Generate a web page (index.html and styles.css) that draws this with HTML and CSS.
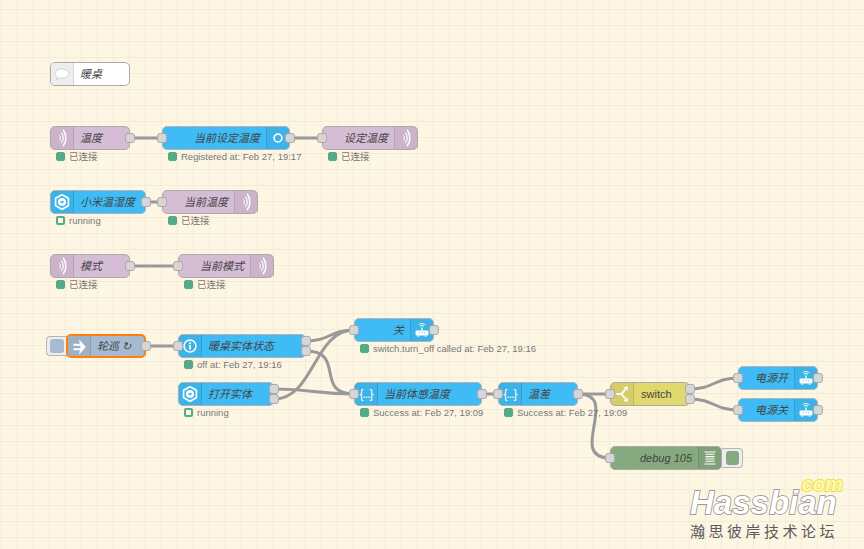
FILE: index.html
```html
<!DOCTYPE html>
<html lang="zh">
<head>
    <meta charset="UTF-8">
    <title>Node-RED flow</title>
    <link rel="stylesheet" href="styles.css">
</head>
<body>
    <svg width="0" height="0" class="defs">
        <symbol id="i-wave" viewBox="0 0 24 24">
            <g fill="none" stroke="#fff" stroke-linecap="round">
                <path d="M9.5 9.5c1.2 1.6 1.2 3.4 0 5" stroke-width="1"/>
                <path d="M11.5 7c2.3 3 2.3 7 0 10" stroke-width="1.3"/>
                <path d="M13.5 3.5c3.6 5 3.6 12 0 17" stroke-width="1.6"/>
            </g>
        </symbol>
        <symbol id="i-hex" viewBox="0 0 24 24">
            <path d="M12 4l7 4v8l-7 4-7-4V8z" fill="none" stroke="#fff" stroke-width="1.8"/>
            <circle cx="12" cy="12" r="4.4" fill="#fff"/>
            <path d="M10 11.2h2V10l2.5 2-2.500 2v-1.200h-2z" fill="#3fbcf5"/>
        </symbol>
        <symbol id="i-ring" viewBox="0 0 24 24">
            <circle cx="12" cy="12" r="4.3" fill="none" stroke="#fff" stroke-width="1.8"/>
        </symbol>
        <symbol id="i-info" viewBox="0 0 24 24">
            <circle cx="12" cy="12" r="6.5" fill="none" stroke="#fff" stroke-width="1.7"/>
            <rect x="11" y="11" width="2" height="5" fill="#fff"/>
            <rect x="11" y="8" width="2" height="2" fill="#fff"/>
        </symbol>
        <symbol id="i-router" viewBox="0 0 24 24">
            <rect x="5" y="12.5" width="14" height="5.5" rx="1" fill="#fff"/>
            <rect x="7" y="18" width="2" height="1.2" fill="#fff"/>
            <rect x="15" y="18" width="2" height="1.2" fill="#fff"/>
            <rect x="11.3" y="9" width="1.4" height="3.5" fill="#fff"/>
            <path d="M9.800 8c1.300-1.200 3.100-1.200 4.400 0M8.500 6.300c2-1.800 5-1.800 7 0" fill="none" stroke="#fff" stroke-width="1"/>
            <path d="M9 15h1M11.500 15h1M14 15h1" stroke="#3fbcf5" stroke-width="1.2"/>
        </symbol>
        <symbol id="i-arrow" viewBox="0 0 24 24">
            <rect x="6" y="8.500" width="7" height="2.200" fill="#fff"/>
            <rect x="6" y="13.300" width="7" height="2.200" fill="#fff"/>
            <path d="M12 3.500l7.500 8.500-7.500 8.500 1.500-8.500z" fill="#fff"/>
        </symbol>
        <symbol id="i-fork" viewBox="0 0 24 24">
            <g fill="none" stroke="#fff" stroke-width="2">
                <path d="M6 12h5.500l4-5M11.500 12l4 5"/>
            </g>
            <path d="M13.500 4.500l5-1-.5 5zM13.500 19.500l5 1-.5-5z" fill="#fff"/>
        </symbol>
        <symbol id="i-bars" viewBox="0 0 24 24">
            <path d="M6 5.500h12M7 8h10M7 10.500h10M7 13h10M7 15.500h10M6 18.500h12" stroke="#fff" stroke-width="1.1"/>
        </symbol>
        <symbol id="i-bubble" viewBox="0 0 24 24">
            <path d="M12 6.500c4.400 0 7.500 2.300 7.500 5s-3.100 5-7.500 5c-.9 0-1.700-.1-2.500-.3L6 18.500l.9-3.500c-1.500-.9-2.400-2.100-2.400-3.500 0-2.700 3.100-5 7.500-5z" fill="#fff" stroke="#ccc"/>
        </symbol>
    </svg>

    <div class="canvas">
        <!-- wires go under the nodes -->
        <svg class="wires" width="864" height="549">
            <g fill="none" stroke="#999" stroke-width="3">
                <path d="M130 138H162"/>
                <path d="M290 138H322"/>
                <path d="M146 202H162"/>
                <path d="M130 266H178"/>
                <path d="M146 346H178"/>
                <path d="M306 341C330 341 330 330 354 330"/>
                <path d="M306 351C346 351 314 394 354 394"/>
                <path d="M274 389C314 389 314 394 354 394"/>
                <path d="M274 399C314 399 314 330 354 330"/>
                <path d="M482 394H498"/>
                <path d="M578 394H610"/>
                <path d="M578 394C622 394 566 458 610 458"/>
                <path d="M690 389C714 389 714 378 738 378"/>
                <path d="M690 399C714 399 714 410 738 410"/>
            </g>
        </svg>

        <div class="node comment n-title">
            <span class="icon"><svg><use href="#i-bubble"/></svg></span>
            <span class="label">暖桌</span>
        </div>

        <div class="node mqtt n-temp">
            <span class="icon"><svg><use href="#i-wave"/></svg></span>
            <span class="label">温度</span>
            <i class="port out"></i>
            <div class="status"><b></b>已连接</div>
        </div>
        <div class="node ha icon-right n-setting">
            <i class="port in"></i>
            <span class="label">当前设定温度</span>
            <span class="icon"><svg><use href="#i-ring"/></svg></span>
            <i class="port out"></i>
            <div class="status"><b></b>Registered at: Feb 27, 19:17</div>
        </div>
        <div class="node mqtt icon-right n-set-temp">
            <i class="port in"></i>
            <span class="label">设定温度</span>
            <span class="icon"><svg><use href="#i-wave"/></svg></span>
            <div class="status"><b></b>已连接</div>
        </div>

        <div class="node ha n-xiaomi">
            <span class="icon"><svg><use href="#i-hex"/></svg></span>
            <span class="label">小米温湿度</span>
            <i class="port out"></i>
            <div class="status"><b class="ring"></b>running</div>
        </div>
        <div class="node mqtt icon-right n-cur-temp">
            <i class="port in"></i>
            <span class="label">当前温度</span>
            <span class="icon"><svg><use href="#i-wave"/></svg></span>
            <div class="status"><b></b>已连接</div>
        </div>

        <div class="node mqtt n-mode">
            <span class="icon"><svg><use href="#i-wave"/></svg></span>
            <span class="label">模式</span>
            <i class="port out"></i>
            <div class="status"><b></b>已连接</div>
        </div>
        <div class="node mqtt icon-right n-cur-mode">
            <i class="port in"></i>
            <span class="label">当前模式</span>
            <span class="icon"><svg><use href="#i-wave"/></svg></span>
            <div class="status"><b></b>已连接</div>
        </div>

        <div class="side-btn n-inject-btn"><b></b></div>
        <div class="node inject selected n-inject">
            <span class="icon"><svg><use href="#i-arrow"/></svg></span>
            <span class="label">轮巡 ↻</span>
            <i class="port out"></i>
        </div>
        <div class="node ha n-state">
            <i class="port in"></i>
            <span class="icon"><svg><use href="#i-info"/></svg></span>
            <span class="label">暖桌实体状态</span>
            <i class="port out first"></i>
            <i class="port out second"></i>
            <div class="status"><b></b>off at: Feb 27, 19:16</div>
        </div>
        <div class="node ha n-open">
            <span class="icon"><svg><use href="#i-hex"/></svg></span>
            <span class="label">打开实体</span>
            <i class="port out first"></i>
            <i class="port out second"></i>
            <div class="status"><b class="ring"></b>running</div>
        </div>
        <div class="node ha icon-right n-off">
            <i class="port in"></i>
            <span class="label">关</span>
            <span class="icon"><svg><use href="#i-router"/></svg></span>
            <i class="port out"></i>
            <div class="status"><b></b>switch.turn_off called at: Feb 27, 19:16</div>
        </div>
        <div class="node ha n-feel">
            <i class="port in"></i>
            <span class="icon braces">{...}</span>
            <span class="label">当前体感温度</span>
            <i class="port out"></i>
            <div class="status"><b></b>Success at: Feb 27, 19:09</div>
        </div>
        <div class="node ha n-diff">
            <i class="port in"></i>
            <span class="icon braces">{...}</span>
            <span class="label">温差</span>
            <i class="port out"></i>
            <div class="status"><b></b>Success at: Feb 27, 19:09</div>
        </div>
        <div class="node switch n-switch">
            <i class="port in"></i>
            <span class="icon"><svg><use href="#i-fork"/></svg></span>
            <span class="label">switch</span>
            <i class="port out first"></i>
            <i class="port out second"></i>
        </div>
        <div class="node ha icon-right n-power-on">
            <i class="port in"></i>
            <span class="label">电源开</span>
            <span class="icon"><svg><use href="#i-router"/></svg></span>
            <i class="port out"></i>
        </div>
        <div class="node ha icon-right n-power-off">
            <i class="port in"></i>
            <span class="label">电源关</span>
            <span class="icon"><svg><use href="#i-router"/></svg></span>
            <i class="port out"></i>
        </div>
        <div class="node debug icon-right n-debug">
            <i class="port in"></i>
            <span class="label">debug 105</span>
            <span class="icon"><svg><use href="#i-bars"/></svg></span>
        </div>
        <div class="side-btn right n-debug-btn"><b></b></div>

        <div class="watermark">
            <span class="wm-com">com</span>
            <span class="wm-name">Hassbian</span>
            <span class="wm-sub">瀚思彼岸技术论坛</span>
        </div>
    </div>
</body>
</html>
```

FILE: styles.css
```css
body {
    margin: 0;
    font-family: "Liberation Sans", "Noto Sans CJK SC", sans-serif;
    overflow: hidden;
}

.defs {
    position: absolute;
}

.canvas {
    position: relative;
    width: 864px;
    height: 549px;
    overflow: hidden;
    background-color: #fdf6e3;
    background-image:
        linear-gradient(#f2eadb 1px, transparent 1px),
        linear-gradient(90deg, #f2eadb 1px, transparent 1px);
    background-size: 16px 16px;
    background-position: 1px 9px;
}

.wires {
    position: absolute;
    left: 0;
    top: 0;
}

/* nodes */
.node {
    position: absolute;
    box-sizing: border-box;
    height: 24px;
    display: flex;
    align-items: stretch;
    border: 1px solid #b0a8a8;
    border-radius: 5px;
    font-size: 11px;
    line-height: 22px;
    font-style: italic;
    color: #444;
}

.mqtt { background: #d6bdd6; }
.ha { background: #3fbcf5; border-color: #a5b5bb; }
.inject { background: #a6bbcf; }
.switch { background: #e2d96e; }
.debug { background: #87a980; }
.comment { background: #fff; }

.selected {
    border: 2px solid #ff7f0e;
    line-height: 20px;
}

.icon {
    flex: 0 0 23px;
    background: rgba(0, 0, 0, 0.05);
    border-right: 1px solid rgba(0, 0, 0, 0.1);
    border-radius: 4px 0 0 4px;
    box-sizing: border-box;
    width: 23px;
    font-style: normal;
}

.icon svg {
    display: block;
    width: 24px;
    height: 22px;
    margin-left: -1px;
}

.icon-right .icon {
    border-right: 0;
    border-left: 1px solid rgba(0, 0, 0, 0.1);
    border-radius: 0 4px 4px 0;
}

.comment .icon {
    background: #eee;
}

.braces {
    color: #fff;
    font-size: 12px;
    text-align: center;
    white-space: nowrap;
    letter-spacing: -1px;
}

.label {
    flex: 1;
    padding: 0 6px;
    white-space: nowrap;
}

.icon-right .label {
    text-align: right;
}

.switch .label {
    font-style: normal;
    padding-left: 7px;
}

/* ports */
.port {
    position: absolute;
    top: 6px;
    width: 10px;
    height: 10px;
    box-sizing: border-box;
    background: #d6d6d6;
    border: 1px solid #aaa;
    border-radius: 3px;
}

.port.in { left: -6px; }
.port.out { right: -6px; }
.port.first { top: 1px; }
.port.second { top: 11px; }
.selected .port { top: 5px; right: -7px; }

/* status line under a node */
.status {
    position: absolute;
    left: 5px;
    top: 25px;
    display: flex;
    align-items: center;
    gap: 4px;
    height: 9px;
    font-size: 9.5px;
    font-style: normal;
    line-height: 9px;
    color: #777;
    white-space: nowrap;
}

.status b {
    width: 9px;
    height: 9px;
    box-sizing: border-box;
    background: #5a8;
    border: 1px solid #5a8;
    border-radius: 2px;
}

.status b.ring {
    background: #fdf6e3;
    border-width: 2px;
}

/* inject / debug buttons */
.side-btn {
    position: absolute;
    box-sizing: border-box;
    width: 21px;
    height: 20px;
    padding: 2px 3px;
    background: #eee;
    border: 1px solid #b5b5b5;
    border-right: 0;
    border-radius: 4px 0 0 4px;
}

.side-btn.right {
    padding: 2px 4px;
    border: 1px solid #b5b5b5;
    border-left: 0;
    border-radius: 0 4px 4px 0;
}

.side-btn b {
    display: block;
    width: 14px;
    height: 14px;
    border-radius: 3px;
    background: #a6bbcf;
}

.side-btn.right b {
    width: 13px;
    background: #87a980;
}

/* where each node sits on the flow canvas */
.n-title { left: 50px; top: 62px; width: 80px; }
.n-temp { left: 50px; top: 126px; width: 80px; }
.n-setting { left: 162px; top: 126px; width: 128px; }
.n-set-temp { left: 322px; top: 126px; width: 96px; }
.n-xiaomi { left: 50px; top: 190px; width: 96px; }
.n-cur-temp { left: 162px; top: 190px; width: 96px; }
.n-mode { left: 50px; top: 254px; width: 80px; }
.n-cur-mode { left: 178px; top: 254px; width: 96px; }
.n-inject-btn { left: 46px; top: 336px; }
.n-inject { left: 66px; top: 334px; width: 80px; }
.n-state { left: 178px; top: 334px; width: 128px; }
.n-open { left: 178px; top: 382px; width: 96px; }
.n-off { left: 354px; top: 318px; width: 80px; }
.n-feel { left: 354px; top: 382px; width: 128px; }
.n-diff { left: 498px; top: 382px; width: 80px; }
.n-switch { left: 610px; top: 382px; width: 80px; }
.n-power-on { left: 738px; top: 366px; width: 80px; }
.n-power-off { left: 738px; top: 398px; width: 80px; }
.n-debug { left: 610px; top: 446px; width: 112px; }
.n-debug-btn { left: 722px; top: 448px; }

/* forum watermark */
.watermark {
    position: absolute;
    left: 689px;
    top: 476px;
    width: 160px;
    height: 68px;
}

.wm-name {
    position: absolute;
    left: 1px;
    top: 14px;
    font-size: 33px;
    line-height: 26px;
    font-weight: bold;
    font-style: italic;
    color: #fff;
    -webkit-text-stroke: 1.5px #8c8c8c;
    paint-order: stroke fill;
}

.wm-com {
    position: absolute;
    left: 113px;
    top: 2px;
    font-size: 20px;
    line-height: 13px;
    font-weight: bold;
    font-style: italic;
    color: #fff9a8;
    -webkit-text-stroke: 2px #eee050;
    paint-order: stroke fill;
}

.wm-sub {
    position: absolute;
    left: 1px;
    top: 46px;
    font-size: 15px;
    line-height: 20px;
    letter-spacing: 3.5px;
    color: #5c5c5c;
    white-space: nowrap;
}
```
